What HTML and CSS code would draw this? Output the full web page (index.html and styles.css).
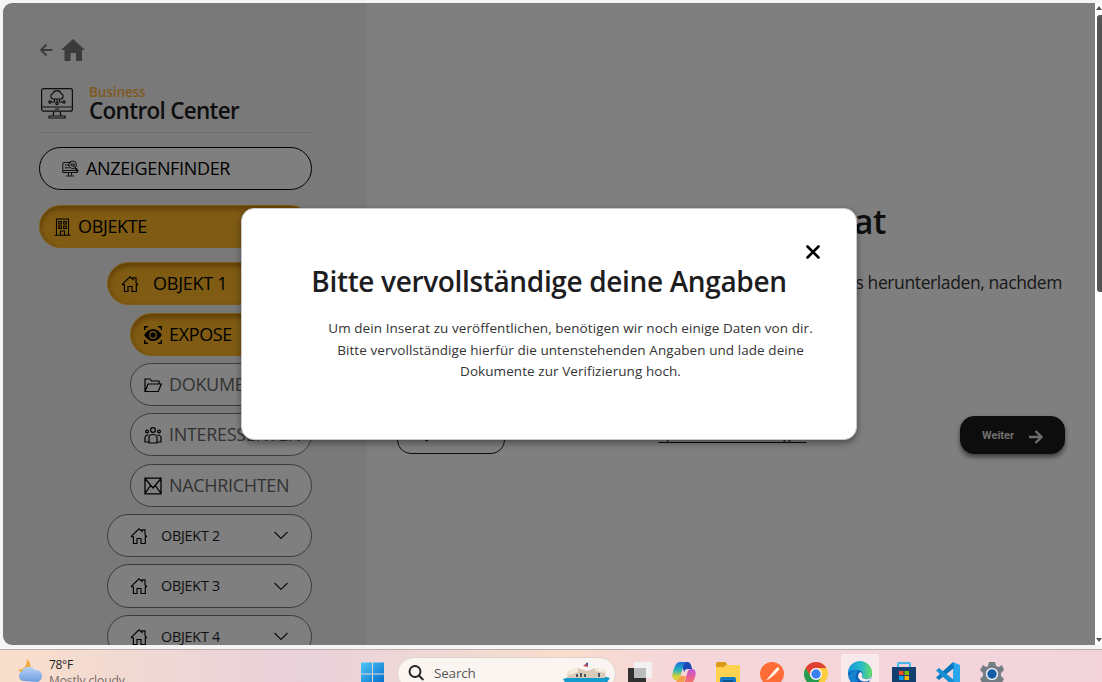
FILE: index.html
```html
<!DOCTYPE html>
<html lang="de">
<head>
<meta charset="utf-8">
<title>Business Control Center</title>
<link rel="stylesheet" href="styles.css">
</head>
<body>
<svg class="sprite" aria-hidden="true">
  <symbol id="house" viewBox="0 0 18 18"><path d="M1 9.700 9 1.800l3 2.700V2.800h3v5l2 1.900M1 9.700h2.400V16.500H7v-5h4v5h4.300V9.700H17" fill="none" stroke="currentColor" stroke-width="1.150"/></symbol>
  <symbol id="chevron" viewBox="0 0 16 9"><path d="m1.500 1 6.500 6.500L14.500 1" fill="none" stroke="currentColor" stroke-width="1.200"/></symbol>
  <symbol id="arrow" viewBox="0 0 14 14"><path d="M0 7h12M6.500 1l6 6-6 6" fill="none" stroke="currentColor" stroke-width="2.300"/></symbol>
</svg>
<div class="screen">
  <div class="browser">
    <div class="app">
      <aside class="sidebar">
        <div class="crumbs">
          <svg class="back" viewBox="0 0 14 14"><path d="M13.500 7H2.500M7.500 1.500 2 7l5.500 5.500" fill="none" stroke="currentColor" stroke-width="1.900"/></svg>
          <svg class="home" viewBox="0 0 24 22"><path d="M12 0 24 11h-3v11h-6v-8H9.500v8H3.500V11H0z" fill="currentColor"/></svg>
        </div>
        <div class="brand">
          <svg class="brand-icon" viewBox="0 0 32 31" fill="none" stroke="currentColor" stroke-width="1.200"><rect x=".6" y=".6" width="30.800" height="22.600" rx="2"/><path d="M.6 19h30.800M14 21h4M13 23.500l-1 4M19 23.500l1 4M8 30v-2h16v2zM12 11a2.800 2.800 0 0 1-.3-5.400 4.500 4.500 0 0 1 8.500 0A2.800 2.800 0 0 1 20 11zM16 11v4M13.500 11v3H10M18.500 11v3H22"/><circle cx="9" cy="14" r="1.200"/><circle cx="16" cy="15.500" r="1.200"/><circle cx="23" cy="14" r="1.200"/></svg>
          <div class="brand-text"><span class="brand-kicker">Business</span><span class="brand-name">Control Center</span></div>
        </div>
        <nav class="menu">
          <a class="item finder"><svg class="ico" viewBox="0 0 17 17" fill="none" stroke="currentColor" stroke-width=".9"><path d="M9 2.500H2Q.8 2.500.8 4v8.500h14.500V10M1 10.500h14M2.800 5H7M2.800 7.800h4M6.500 13v2.500M9.500 13v2.500M4 16h8"/><circle cx="10.700" cy="4.800" r="3.800"/><path d="m13.200 7.800 3 3.700" stroke-width="1.600"/><path d="M9.200 5.500V4h3v2.500z"/></svg><span>ANZEIGENFINDER</span></a>
          <a class="item active objects"><svg class="ico" viewBox="0 0 17 18" fill="none" stroke="currentColor" stroke-width="1.100"><path d="M2.500 17V1h12v16M.5 17.300h16M6.500 17v-4h4v4M4.800 3.500h2.500v2.500H4.800zM9.700 3.500h2.500v2.500H9.700zM4.800 8h2.500v2.500H4.800zM9.700 8h2.500v2.500H9.700z"/></svg><span>OBJEKTE</span></a>
          <a class="item active object-open"><svg class="house"><use href="#house"/></svg><span>OBJEKT 1</span></a>
          <a class="item active sub expose"><svg class="ico" viewBox="0 0 18 18"><path d="M.7 4V.8H4M14 .8h3.300V4M17.300 14v3.200H14M4 17.200H.7V14" fill="none" stroke="currentColor" stroke-width="1.400"/><path d="M0 9q4-6 9-6t9 6q-4 6-9 6T0 9z" fill="currentColor"/><circle class="iris" cx="9" cy="9" r="3.300" fill="none" stroke-width="1.200"/></svg><span>EXPOSE</span></a>
          <a class="item sub muted"><svg class="ico" viewBox="0 0 18 18" fill="none" stroke="currentColor" stroke-width="1.200"><path d="M1 15.500V3h5l1.500 2h7.500v3M1 15.500 4 8h13.300l-3 7.500z"/></svg><span>DOKUMENTE</span></a>
          <a class="item sub muted"><svg class="ico" viewBox="0 0 18 18" fill="none" stroke="currentColor" stroke-width="1.200"><circle cx="9" cy="4" r="2.400"/><circle cx="3" cy="5.500" r="1.400"/><circle cx="15" cy="5.500" r="1.400"/><path d="M5 17v-5.500Q5 8.500 9 8.500t4 3V17zM5 16H1v-4q0-3 3.500-3M13 16h4v-4q0-3-3.500-3"/></svg><span>INTERESSENTEN</span></a>
          <a class="item sub muted last"><svg class="ico" viewBox="0 0 18 18" fill="none" stroke="currentColor" stroke-width="1.300"><path d="M1 1.200h16v15.600H1zM1 1.500l8 9.500 8-9.500M1 16.500l5.500-8M17 16.500l-5.500-8"/></svg><span>NACHRICHTEN</span></a>
          <a class="item object"><svg class="house"><use href="#house"/></svg><span>OBJEKT 2</span><svg class="chev"><use href="#chevron"/></svg></a>
          <a class="item object tall"><svg class="house"><use href="#house"/></svg><span>OBJEKT 3</span><svg class="chev"><use href="#chevron"/></svg></a>
          <a class="item object"><svg class="house"><use href="#house"/></svg><span>OBJEKT 4</span><svg class="chev"><use href="#chevron"/></svg></a>
        </nav>
      </aside>
      <main class="content">
        <h1 class="headline">Veröffentliche Inserat</h1>
        <p class="lead">Du kannst dein Expose jederzeit als herunterladen, nachdem</p>
        <div class="actions">
          <button class="btn btn-back"><svg class="arrow flip"><use href="#arrow"/></svg>Zurück</button>
          <a class="later">Später vervollständigen</a>
          <button class="btn btn-next">Weiter<svg class="arrow"><use href="#arrow"/></svg></button>
        </div>
      </main>
      <div class="backdrop"></div>
      <section class="modal" role="dialog">
        <svg class="close" viewBox="0 0 14 14"><path d="m1.500 1.500 11 11M12.500 1.500l-11 11" stroke="currentColor" stroke-width="2.600" stroke-linecap="round"/></svg>
        <h2 class="modal-title">Bitte vervollständige deine Angaben</h2>
        <p class="modal-text">Um dein Inserat zu veröffentlichen, benötigen wir noch einige Daten von dir.<br>Bitte vervollständige hierfür die untenstehenden Angaben und lade deine<br>Dokumente zur Verifizierung hoch.</p>
      </section>
    </div>
    <div class="scrollbar"><i class="up"></i><i class="thumb"></i><i class="down"></i></div>
  </div>
  <footer class="taskbar">
    <div class="weather">
      <svg class="weather-icon" viewBox="0 0 26 24"><defs><linearGradient id="cl" x2="0" y2="1"><stop stop-color="#b9d5fa"/><stop offset="1" stop-color="#6f9bdc"/></linearGradient></defs><path d="M10 0q5 5 3 11L5 14l-4-3q9 0 9-11z" fill="#efaa35"/><path d="M6 22a6 5.500 0 0 1-1-10 7.500 7.500 0 0 1 13-1 6 6 0 0 1 2 12z" fill="url(#cl)"/></svg>
      <div class="weather-text"><span>78°F</span><span class="cond">Mostly cloudy</span></div>
    </div>
    <svg class="start" viewBox="0 0 24 24"><defs><linearGradient id="wn" x2="1" y2="1"><stop stop-color="#4cc8f6"/><stop offset="1" stop-color="#0268c9"/></linearGradient></defs><path d="M0 0h11.500v11.500H0zM12.500 0H24v11.500H12.500zM0 12.500h11.500V24H0zM12.500 12.500H24V24H12.500z" fill="url(#wn)"/></svg>
    <div class="search">
      <svg class="lens" viewBox="0 0 16 16" fill="none" stroke="#222" stroke-width="1.900"><circle cx="7" cy="6.500" r="5.500"/><path d="m11 10.500 4.300 4.500"/></svg>
      <span>Search</span>
      <svg class="ship" viewBox="0 0 48 22"><path d="M0 17q10-4 24-2 13-3 23 1l-4 6H3z" fill="#159ccc"/><path d="m5 9 10-3 9 3 8-3 11 2-1 8H4z" fill="#d9cdb9"/><path d="m5 9 10-3v4l-9 3zM32 6l11 2v3l-11-2z" fill="#f4eddc"/><path d="M13 12h2v3h-2zM17 11h2v4h-2zM21 12h2v3h-2zM35 11h2v4h-2z" fill="#515762"/><path d="m20 4 5-4v5z" fill="#c94654"/><path d="M23 1h2v2h-2z" fill="#345fac"/></svg>
    </div>
    <div class="dock">
      <svg viewBox="0 0 24 24"><path d="M0 6h18v18H0z" fill="#303030"/><path d="M6 0h18v16H6z" fill="#f2f2f2"/><path d="M6 6h12v10H6z" fill="#bcbcbc"/></svg>
      <svg viewBox="0 0 24 24"><defs><linearGradient id="cpa" x2="0" y2="1"><stop stop-color="#1b6be0"/><stop offset=".45" stop-color="#25b5b8"/><stop offset=".8" stop-color="#d8d23a"/></linearGradient><linearGradient id="cpb" x2="0" y2="1"><stop stop-color="#b659e0"/><stop offset=".5" stop-color="#ee5f92"/><stop offset="1" stop-color="#f78a4a"/></linearGradient></defs><path d="M9 0h6q3 0 4 3l1.200 4H15q-2 0-3 3z" fill="#1a48b8"/><path d="M8 0h6q-2 1-2.700 4L8.500 14q-1 4-4 4Q0 18 .3 13 1 8 3.500 3 5 0 8 0z" fill="url(#cpa)"/><path d="M16 24h-6q2-1 2.700-4l2.800-10q1-3 4-3 4.500 0 4.200 5-.7 5-3.200 9-1.500 3-4.500 3z" fill="url(#cpb)"/><path d="M15 24H9q-3 0-4-3l-1-3q3 0 4.500-4H14l-2 7q-.5 2 3 3z" fill="#f3a04c"/></svg>
      <svg viewBox="0 0 24 24"><path d="M0 2q0-2 2-2h7l3 3h12v21H0z" fill="#ffd150"/><path d="M0 2q0-2 2-2h7l2 2-3 3H0z" fill="#d99a16"/><path d="M4 24v-7q0-2 2-2h12q2 0 2 2v7z" fill="#1377c5"/><path d="M7 18h10v2H7z" fill="#075590"/></svg>
      <svg viewBox="0 0 24 24"><circle cx="12" cy="12" r="12" fill="#ff6c37"/><path d="M6 18.500 12 11l4-4.500q2-2 3-.5t-1 3L13 14l-4 3z" fill="#fff2e8"/></svg>
      <svg viewBox="0 0 24 24"><circle cx="12" cy="12" r="12" fill="#ffcd40"/><path d="M1.600 6A12 12 0 0 1 22.400 6H12a6 6 0 0 0-5.200 9z" fill="#df4035"/><path d="M1.600 6A12 12 0 0 0 12 24l5.200-9H12a6 6 0 0 1-5.200 0z" fill="#259b4f"/><circle cx="12" cy="12" r="6" fill="#fff"/><circle cx="12" cy="12" r="4.700" fill="#3e7ff0"/></svg>
      <div class="tile"><svg viewBox="0 0 24 24"><defs><linearGradient id="eg" x1="0" x2="1"><stop stop-color="#1696e0"/><stop offset=".55" stop-color="#29bac8"/><stop offset="1" stop-color="#6ade63"/></linearGradient></defs><circle cx="12" cy="12" r="12" fill="#0b63b8"/><path d="M0 11A12 12 0 0 1 24 11q0 6-6 6-5 0-4-3 2-5-4-6-7 0-10 3z" fill="url(#eg)"/><path d="M10 9q-5 6 0 11 4 4 10 0-4 5-10 4Q1 22 1 14q2-6 9-5z" fill="#1682d2"/><path d="M14 14q1-3-2-4-4 4 0 8 5 3 10 0l2-5q-2 5-7 4-4-1-3-3z" fill="#f8ebef"/></svg></div>
      <svg viewBox="0 0 24 24"><path d="M6 6V2q0-1 1-1h10q1 0 1 1v4" fill="none" stroke="#43b9e8" stroke-width="2"/><path d="M0 5h24v16q0 3-3 3H3q-3 0-3-3z" fill="#123f70"/><path d="M7 9h4.500v4H7z" fill="#f25022"/><path d="M12.500 9H17v4h-4.500z" fill="#7fba00"/><path d="M7 14h4.500v4H7z" fill="#00a4ef"/><path d="M12.500 14H17v4h-4.500z" fill="#ffb900"/></svg>
      <svg viewBox="0 0 24 24"><path d="m17 0 7 3v18l-7 3z" fill="#29a7ee"/><path d="m17 0 1 6L3 18l-3-2.500z" fill="#0877bd"/><path d="m17 24 1-6L3 6 0 8.500z" fill="#168fd5"/></svg>
      <svg viewBox="0 0 24 24"><path d="M9 0h6l1 4 3 1 3-2 2 5-3 3v3l3 3-3 5-4-2-2 1v3H9v-3l-3-1-3 2-3-5 3-3v-3L0 8l3-5 3 2 2-1z" fill="#747c86"/><circle cx="12" cy="12" r="6.200" fill="#eceff2"/><circle cx="12" cy="12" r="4.700" fill="#125da7"/></svg>
    </div>
  </footer>
</div>
</body>
</html>
```
FILE: styles.css
```css
* { box-sizing: border-box; }
body { margin: 0; overflow: hidden; font-family: "Open Sans", "Noto Sans", sans-serif; color: #1d1d1f; }
svg { display: block; flex: none; overflow: visible; }
.sprite { position: absolute; width: 0; height: 0; }
.screen { width: 1102px; height: 682px; display: flex; flex-direction: column; background: #f5f5f5; overflow: hidden; }
.browser { height: 649px; flex: none; display: flex; padding: 3px 0 4px 3px; }
.app { position: relative; width: 1092px; height: 642px; display: flex; overflow: hidden; border-radius: 9px 0 0 9px; background: #fff; }
.sidebar { width: 364px; flex: none; padding: 35px 55px 0 36px; background: #f2f2f2; }
.crumbs { display: flex; align-items: center; gap: 8px; height: 23px; color: #777; }
.back { width: 14px; height: 14px; }
.home { width: 24px; height: 22px; }
.brand { display: flex; gap: 16px; height: 68px; padding: 19px 0 0 2px; border-bottom: 1px solid #dedede; margin-top: 4px; }
.brand-icon { width: 32px; height: 31px; margin-top: 4px; }
.brand-text { display: flex; flex-direction: column; white-space: nowrap; padding-top: 1px; }
.brand-kicker { font-size: 13.500px; line-height: 15px; font-weight: 600; letter-spacing: -.1px; color: #ffb33d; }
.brand-name { font-size: 22.500px; line-height: 22px; font-weight: 600; letter-spacing: -.7px; }
.menu { display: flex; flex-direction: column; padding-top: 14px; color: #000; }
.item { height: 43px; flex: none; display: flex; align-items: center; border: 1px solid #777; border-radius: 22px; font-size: 18px; letter-spacing: -.35px; white-space: nowrap; background: #fff; }
.item span { padding-bottom: 2px; }
.ico { width: 18px; height: 18px; margin-right: 7px; color: #000; }
.finder { border-color: #000; padding-left: 22px; }
.finder .ico { width: 17px; height: 17px; }
.active { border-color: #ffb82b; background: #ffb726; box-shadow: inset 0 5px 6px -2px #b87a08, inset 3px 0 4px -2px #d08e18; }
.objects { margin-top: 15px; padding-left: 14px; }
.objects .ico { width: 17px; }
.object-open { margin: 14px 0 0 68px; padding-left: 13px; letter-spacing: -.25px; }
.house { width: 18px; height: 18px; margin-right: 14px; color: #000; }
.sub { margin: 7px 0 0 91px; padding-left: 13px; }
.expose { margin-top: 8px; }
.last { margin-top: 8px; }
.iris { stroke: #ffb726; }
.muted { color: #666; letter-spacing: -.33px; }
.object { margin: 7px 0 0 68px; padding: 0 22px; font-size: 14.300px; letter-spacing: -.2px; color: #1d1d1f; }
.object span { padding-bottom: 0; }
.object .house { margin-right: 13px; }
.tall { height: 44px; }
.tall span { padding-bottom: 1px; }
.chev { width: 16px; height: 9px; margin-left: auto; }
.content { width: 728px; padding: 196px 33px 0 30px; overflow: hidden; }
.headline { margin: 0; padding-right: 176px; text-align: right; font-size: 34px; line-height: 44px; font-weight: 600; white-space: nowrap; letter-spacing: -.5px; }
.lead { margin: 25px 0 0; font-size: 17.500px; line-height: 28px; display: flex; justify-content: flex-end; white-space: nowrap; letter-spacing: -.4px; color: #333; }
.actions { display: flex; align-items: center; justify-content: space-between; margin: 120px -3px 0 0; height: 38px; }
.btn { height: 38px; display: flex; align-items: center; gap: 15px; padding: 0 21px; border-radius: 14px; border: 1px solid #1a1a1a; font: bold 11px Roboto, sans-serif; }
.btn-back { width: 108px; padding: 0 0 0 22px; background: #fff; color: #1a1a1a; }
.btn-next { width: 105px; background: #1a1a1a; color: #ddd; box-shadow: 0 3px 5px #777; }
.arrow { width: 14px; height: 14px; margin-top: 3px; }
.flip { transform: scaleX(-1); margin-top: 0; }
.later { font-size: 13.500px; text-decoration: underline; text-underline-offset: 2px; text-decoration-skip-ink: none; }
.backdrop { position: absolute; inset: 0; background: rgba(0, 0, 0, .5); }
.modal { position: absolute; left: 238px; top: 205px; width: 616px; height: 232px; padding-top: 36px; border: 1px solid #c9c9cf; border-radius: 13px; background: #fff; box-shadow: 0 3px 7px rgba(0, 0, 0, .4); }
.close { width: 14px; height: 14px; margin-left: 564px; color: #000; }
.modal-title { margin: 2px 0 0; text-align: center; font-size: 28px; line-height: 40px; font-weight: 600; letter-spacing: -.35px; white-space: nowrap; }
.modal-text { margin: 17px 0 0 43px; text-align: center; font-size: 13.500px; line-height: 21.600px; letter-spacing: .07px; white-space: nowrap; color: #333; }
.scrollbar { width: 7px; height: 642px; display: flex; flex-direction: column; align-items: flex-end; background: #fff; }
.up { margin-top: 3px; border: 3px solid transparent; border-top: 0; border-bottom: 4px solid #555; }
.thumb { width: 5px; height: 277px; margin-top: 5px; border-radius: 3px 0 0 3px; background: #555; }
.down { margin: auto 0 3px; border: 3px solid transparent; border-bottom: 0; border-top: 4px solid #555; }
.taskbar { height: 33px; flex: none; display: flex; align-items: flex-start; border-top: 1px solid #bdaeae; background: linear-gradient(90deg, #f9dfcb, #efd8d4 14%, #e8d1da 27%, #efd9d5 40%, #f8ddcc 51%, #f5d7d9 60%, #f2d3dc); overflow: hidden; }
.weather { width: 361px; display: flex; padding: 9px 0 0 17px; gap: 6px; }
.weather-icon { width: 26px; height: 24px; }
.weather-text { display: flex; flex-direction: column; font-size: 12px; line-height: 16px; letter-spacing: -.3px; margin-top: -2px; }
.cond { color: #77696a; letter-spacing: -.1px; }
.start { width: 23px; height: 24px; margin-top: 12px; }
.search { width: 219px; height: 33px; margin: 7px 12px 0 13px; padding: 0 4px 2px 10px; display: flex; align-items: center; border: 1px solid #e1d2ce; border-radius: 17px; background: #fbf5f2; color: #555; font-size: 13.500px; letter-spacing: -.2px; }
.lens { width: 16px; height: 16px; margin-right: 10px; }
.ship { width: 48px; height: 22px; margin-left: auto; }
.dock { display: flex; gap: 20px; padding-top: 12px; }
.dock svg { width: 24px; height: 24px; }
.tile { width: 38px; height: 40px; margin: -8px -7px 0; padding: 8px 7px; border-radius: 4px; background: #f9e9ed; }
```
